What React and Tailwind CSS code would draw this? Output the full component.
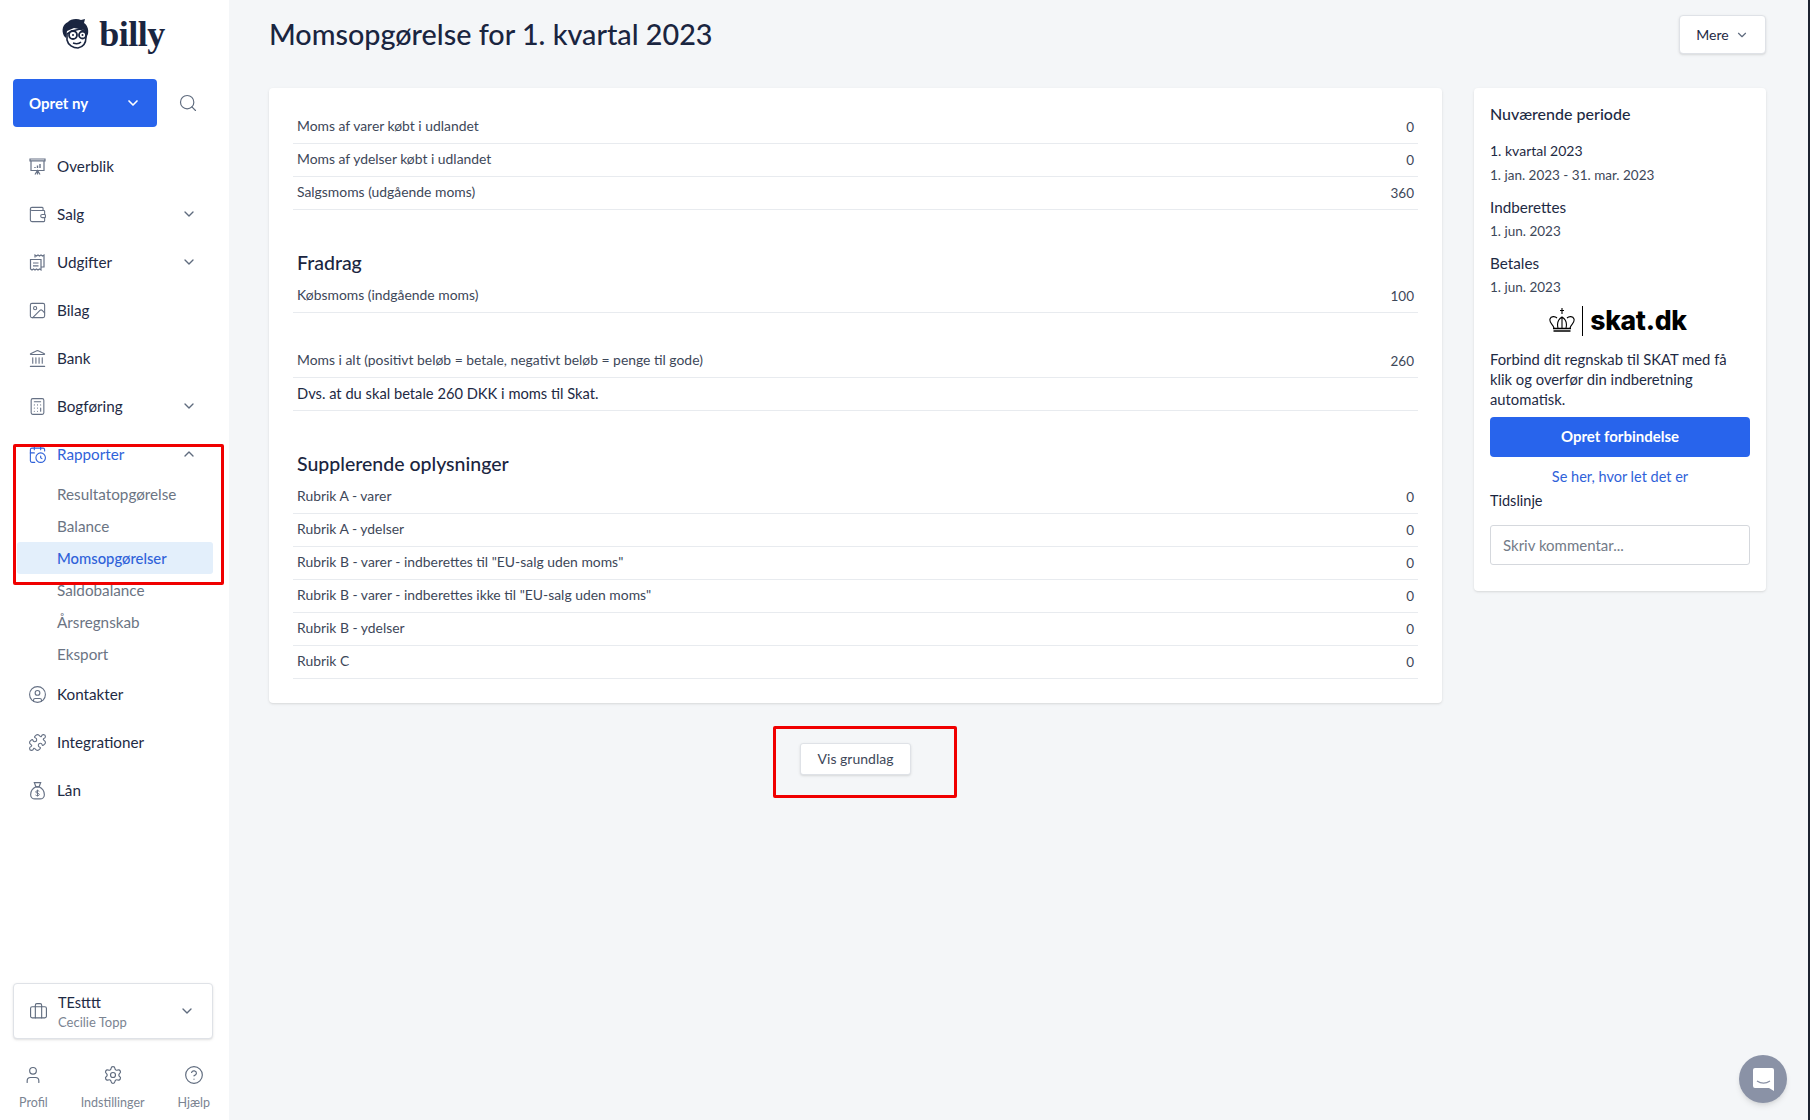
import { ChevronDown, ChevronUp, Search, Wallet, Image, Landmark, Calculator, CalendarClock, CircleUser, Puzzle, Briefcase, User, Settings, CircleHelp } from 'lucide-react';

const OverblikIcon = ({ className }) => (
  <svg width="19" height="19" viewBox="0 0 19 19" fill="none" stroke="currentColor" strokeWidth="1.2" className={className}>
    <path d="M2 2h15v1.800H2zM3 3.800v9.700h13V3.800" />
    <path d="M9.500 13.500v4M7 17.500l2.500-4 2.500 4" />
    <path d="M7 11v-1M9.500 11V8.500M12 11V7" strokeWidth="1.4" />
  </svg>
);

const UdgifterIcon = ({ className }) => (
  <svg width="19" height="19" viewBox="0 0 19 19" fill="none" stroke="currentColor" strokeWidth="1.2" className={className}>
    <path d="M7 4.500V2l1.500 1L10 2l1.500 1L13 2l1.500 1L16 2v12h-3" />
    <path d="M2.500 6.500h10.500V17l-1.500-1-1.500 1-1.500-1L7 17l-1.500-1-1.500 1-1.500-1z" />
    <path d="M5 10h5.500M5 12.800h5.500" />
  </svg>
);

const NavItem = ({ icon: Icon, label, chevron }) => (
  <div className="flex h-12 items-center pl-[28px] pr-[32px]">
    <Icon size={19} strokeWidth={1.4} className="text-[#667185] shrink-0" />
    <span className="ml-[10px] flex-1 text-[15.25px] text-[#1e2a44]">{label}</span>
    {chevron && <ChevronDown size={16} className="text-[#5f6b7e]" />}
  </div>
);

const SubItem = ({ label, active }) => (
  <div className={`ml-[17px] flex h-8 w-[196px] items-center rounded-[3px] pl-[40px] ${active ? 'bg-[#e3effb] text-[14.8px] font-medium text-[#2f62d9]' : 'text-[15.25px] text-[#6b7483]'}`}>
    {label}
  </div>
);

const LoanIcon = () => (
  <svg width="19" height="19" viewBox="0 0 17 18" fill="none" stroke="#667185" strokeWidth="1.1" className="shrink-0">
    <path d="M5.500 1.500h6L10 5.500H7z" />
    <path d="M7 5.500h3c3 1.500 5 4.500 5 7.500 0 2.500-2 4-4 4H6c-2 0-4-1.500-4-4 0-3 2-6 5-7.500z" />
    <path d="M10.200 9.800c-.5-.8-3.400-.9-3.400.6s3.400.8 3.400 2.400-3 1.300-3.600.4M8.500 8.200v6.400" strokeWidth="0.9" />
  </svg>
);

const Row = ({ label, value, strong }) => (
  <div className="flex h-[33px] items-center justify-between border-b border-[#e8ebef] px-1">
    <span className={strong ? 'pb-[1px] text-[14.7px] text-[#1e2a44]' : 'pb-[1px] text-[13.9px] text-[#3d4759]'}>{label}</span>
    {value !== undefined && <span className="text-[13.5px] text-[#3d4759]">{value}</span>}
  </div>
);

const BillyLogo = () => (
  <div className="flex h-[79px] items-center justify-center pb-[12px] pr-[3px]">
    <svg width="30" height="32" viewBox="0 0 30 32" className="mr-[8px]">
      <path d="M3 18C0 12 2 6 7 4c2-3 9-4 13-2l4-1-1 4c3 2 5 6 4 11l-2 4-2-8-10-2-7 3-1 7z" fill="#1a2540" />
      <path d="M6 16v6c1 5 6 8 11 8 5-1 8-5 8-11v-5l-6-3-8 2z" fill="#fff" stroke="#1a2540" strokeWidth="1.6" />
      <circle cx="12" cy="17" r="4" fill="#fff" stroke="#1a2540" strokeWidth="1.8" />
      <circle cx="21.500" cy="17" r="3.500" fill="#fff" stroke="#1a2540" strokeWidth="1.8" />
      <circle cx="12" cy="17" r="1" fill="#1a2540" />
      <circle cx="21.500" cy="17" r="1" fill="#1a2540" />
      <path d="M12 25c3 1 6 1 8-1" fill="none" stroke="#1a2540" strokeWidth="1.5" />
    </svg>
    <span className="font-['Liberation_Serif',serif] text-[36px] font-bold leading-none tracking-[-0.5px] text-[#1a2540]">billy</span>
  </div>
);

const Crown = () => (
  <svg width="26" height="26" viewBox="0 0 26 26" fill="none" stroke="#000" strokeWidth="1.1">
    <path d="M13 0v6M11 2.500h4" />
    <path d="M5 20c-1-4-5-5-4-9 1-3 5-3 7-1M21 20c1-4 5-5 4-9-1-3-5-3-7-1M9 20c-1-4-1-8 4-11 5 3 5 7 4 11M13 9v11" />
    <path d="M4 20.500h18M4.500 23h17" strokeWidth="1.6" />
  </svg>
);

export default function App() {
  return (
    <div className="relative flex h-[1120px] w-[1810px] overflow-hidden bg-[#f4f6f8] font-['Lato',sans-serif]">
      {/* Sidebar */}
      <aside className="flex w-[229px] shrink-0 flex-col bg-white">
        <BillyLogo />
        <div className="flex items-center px-[13px]">
          <button className="flex h-12 w-[144px] items-center justify-between rounded-[4px] bg-[#2864ec] pl-4 pr-4 text-[15px] font-bold text-white">
            Opret ny
            <ChevronDown size={16} strokeWidth={2.5} />
          </button>
          <Search size={20} strokeWidth={1.4} className="ml-[21px] text-[#5f6b7e]" />
        </div>
        <nav className="mt-[15px] flex flex-col">
          <NavItem icon={OverblikIcon} label="Overblik" />
          <NavItem icon={Wallet} label="Salg" chevron />
          <NavItem icon={UdgifterIcon} label="Udgifter" chevron />
          <NavItem icon={Image} label="Bilag" />
          <NavItem icon={Landmark} label="Bank" />
          <NavItem icon={Calculator} label="Bogføring" chevron />
          <div className="flex h-12 items-center pl-[28px] pr-[32px]">
            <CalendarClock size={19} strokeWidth={1.4} className="shrink-0 text-[#2f62d9]" />
            <span className="ml-[10px] flex-1 text-[15.25px] text-[#2f62d9]">Rapporter</span>
            <ChevronUp size={16} className="text-[#5f6b7e]" />
          </div>
          <div className="flex flex-col">
            <SubItem label="Resultatopgørelse" />
            <SubItem label="Balance" />
            <SubItem label="Momsopgørelser" active />
            <SubItem label="Saldobalance" />
            <SubItem label="Årsregnskab" />
            <SubItem label="Eksport" />
          </div>
          <NavItem icon={CircleUser} label="Kontakter" />
          <NavItem icon={Puzzle} label="Integrationer" />
          <div className="flex h-12 items-center pl-[28px]">
            <LoanIcon />
            <span className="ml-[10px] text-[15.25px] text-[#1e2a44]">Lån</span>
          </div>
        </nav>
        <div className="mt-auto px-[13px]">
          <div className="flex h-[56px] w-[200px] items-center rounded-[4px] border border-[#dfe2e7] bg-white pl-[15px] pr-[17px] shadow-sm">
            <Briefcase size={19} strokeWidth={1.4} className="shrink-0 text-[#5f6b7e]" />
            <div className="ml-[10px] flex-1 pt-[2px]">
              <div className="text-[14.5px] leading-[20px] text-[#1e2a44]">TEstttt</div>
              <div className="text-[13px] leading-[19px] text-[#7b8492]">Cecilie Topp</div>
            </div>
            <ChevronDown size={16} className="text-[#5f6b7e]" />
          </div>
        </div>
        <div className="flex h-[81px] items-start justify-between px-[19px] pt-[26px] text-[12.5px] text-[#7b8492]">
          {[[User, 'Profil'], [Settings, 'Indstillinger'], [CircleHelp, 'Hjælp']].map(([Icon, label]) => (
            <div key={label} className="flex flex-col items-center gap-[10px]">
              <Icon size={20} strokeWidth={1.4} className="text-[#5f6b7e]" />
              <span className="leading-4">{label}</span>
            </div>
          ))}
        </div>
      </aside>

      {/* Main */}
      <main className="flex-1 pl-[40px] pr-[42px]">
        <div className="flex h-[88px] items-start justify-between">
          <h1 className="mt-[14px] text-[28.75px] font-medium leading-[40px] text-[#1a2540]">Momsopgørelse for 1. kvartal 2023</h1>
          <button className="mt-[15px] flex h-[39px] w-[87px] items-center justify-center gap-[6px] rounded-[4px] border border-[#dfe2e7] bg-white text-[14px] text-[#1e2a44] shadow-sm">
            Mere
            <ChevronDown size={14} className="text-[#5f6b7e]" />
          </button>
        </div>
        <div className="flex items-start gap-[32px]">
          <div className="flex-1">
            <section className="h-[615px] rounded-[4px] bg-white px-[24px] pt-[23px] shadow-sm">
              <Row label="Moms af varer købt i udlandet" value="0" />
              <Row label="Moms af ydelser købt i udlandet" value="0" />
              <Row label="Salgsmoms (udgående moms)" value="360" />
              <h2 className="mb-[1px] mt-[37px] px-1 text-[19.5px] font-medium leading-[32px] text-[#1a2540]">Fradrag</h2>
              <Row label="Købsmoms (indgående moms)" value="100" />
              <div className="h-8" />
              <Row label="Moms i alt (positivt beløb = betale, negativt beløb = penge til gode)" value="260" />
              <Row label="Dvs. at du skal betale 260 DKK i moms til Skat." strong />
              <h2 className="mb-[1px] mt-[37px] px-1 text-[19.5px] font-medium leading-[32px] text-[#1a2540]">Supplerende oplysninger</h2>
              <Row label="Rubrik A - varer" value="0" />
              <Row label="Rubrik A - ydelser" value="0" />
              <Row label={'Rubrik B - varer - indberettes til "EU-salg uden moms"'} value="0" />
              <Row label={'Rubrik B - varer - indberettes ikke til "EU-salg uden moms"'} value="0" />
              <Row label="Rubrik B - ydelser" value="0" />
              <Row label="Rubrik C" value="0" />
            </section>
            <div className="mt-[40px] flex justify-center">
              <button className="h-8 w-[111px] rounded-[3px] border border-[#dfe2e7] bg-white pb-[1px] text-[14px] text-[#3d4759] shadow-sm">Vis grundlag</button>
            </div>
          </div>

          <section className="h-[503px] w-[292px] shrink-0 rounded-[4px] bg-white px-[16px] pt-[14px] text-[#1e2a44] shadow-sm">
            <h3 className="text-[16px] font-medium leading-6">Nuværende periode</h3>
            <div className="mt-[13px] text-[14px] leading-6">1. kvartal 2023</div>
            <div className="text-[13.5px] leading-6 text-[#3d4759]">1. jan. 2023 - 31. mar. 2023</div>
            <div className="mt-[8px] text-[15.25px] leading-6">Indberettes</div>
            <div className="text-[13.5px] leading-6 text-[#3d4759]">1. jun. 2023</div>
            <div className="mt-[8px] text-[15.25px] leading-6">Betales</div>
            <div className="text-[13.5px] leading-6 text-[#3d4759]">1. jun. 2023</div>
            <div className="mt-[7px] flex h-[30px] items-center justify-center gap-[7px] pr-[4px]">
              <Crown />
              <div className="h-[30px] w-px bg-black" />
              <span className="font-['Inter',sans-serif] text-[26.5px] font-extrabold tracking-[-0.3px] text-black">skat.dk</span>
            </div>
            <p className="mt-[13px] text-[14.8px] leading-5">Forbind dit regnskab til SKAT med få klik og overfør din indberetning automatisk.</p>
            <button className="mt-[8px] h-10 w-full rounded-[4px] bg-[#2864ec] pb-[1px] text-[15px] font-bold text-white">Opret forbindelse</button>
            <div className="mt-[10px] text-center text-[14.5px] leading-5 text-[#2f62d9]">Se her, hvor let det er</div>
            <div className="mt-[4px] text-[14.5px] leading-5 text-[#1a2540]">Tidslinje</div>
            <input readOnly placeholder="Skriv kommentar..." className="mt-[14px] h-10 w-full rounded-[3px] border border-[#d5d8dd] bg-white px-3 text-[15px] outline-none placeholder:text-[#737b88]" />
          </section>
        </div>
      </main>

      <div className="w-[2px] shrink-0 bg-[#1c2230]" />

      {/* Chat bubble */}
      <div className="absolute left-[1739px] top-[1055px] flex h-12 w-12 items-center justify-center rounded-full bg-[#8a92a6] shadow-md">
        <svg width="21" height="23" viewBox="0 0 21 23" fill="#fff">
          <path d="M2 0h17a2 2 0 0 1 2 2v21l-5-3H2a2 2 0 0 1-2-2V2a2 2 0 0 1 2-2z" />
          <path d="M4 13c4 2.700 9 2.700 13 0" fill="none" stroke="#8a92a6" strokeWidth="1.2" />
        </svg>
      </div>

      {/* Red annotation frames */}
      <div className="absolute left-[13px] top-[444px] h-[141px] w-[211px] rounded-[2px] border-[3px] border-[#f00000]" />
      <div className="absolute left-[773px] top-[726px] h-[72px] w-[184px] rounded-[2px] border-[3px] border-[#f00000]" />
    </div>
  );
}
